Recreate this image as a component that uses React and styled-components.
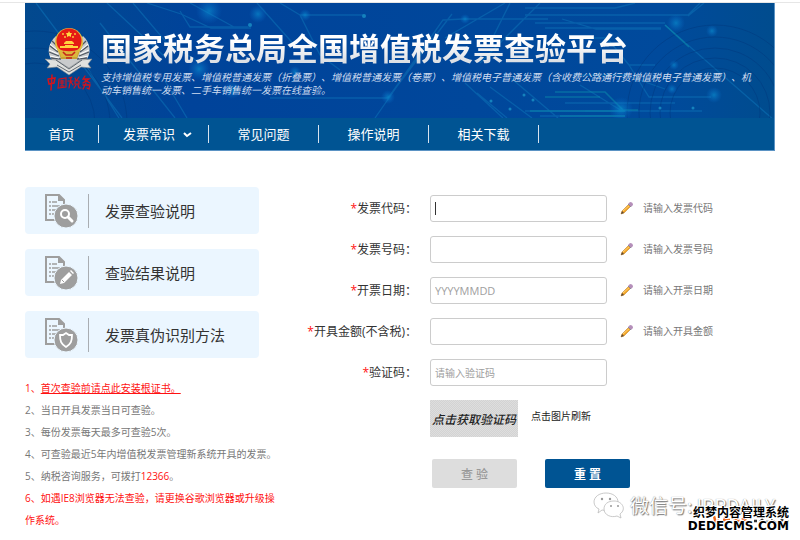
import React from "react";
import styled, { createGlobalStyle } from "styled-components";

const GlobalStyle = createGlobalStyle`
  *, *::before, *::after { box-sizing: border-box; }
  body {
    margin: 0;
    background: #fff;
    color: #333;
    font-family: "Open Sans", "Noto Sans CJK SC", sans-serif;
    font-size: 12px;
    text-spacing-trim: space-all;
  }
  button, input { font-family: inherit; }
`;

const Page = styled.div`
  position: relative;
  border-top: 1px solid #fff;
  padding: 0 25px 12px;
`;

const TopLine = styled.hr`
  height: 1px;
  margin: 1px -25px 0;
  border: 0;
  background: #e6e6e6;
`;

const Header = styled.header`
  background: #005493;
  border-right: 1px solid #5b93c4;
  border-bottom: 1px solid #5b93c4;
`;

const Banner = styled.div`
  position: relative;
  display: flex;
  gap: 10px;
  height: 115px;
  padding: 23px 9px 0 20px;
  background: linear-gradient(90deg, #02498e 0%, #00439a 22%, #00479b 60%, #004a9c 85%, #004c8e 100%);
  overflow: hidden;
`;

const Circuit = styled.svg`
  position: absolute;
  inset: 0;
  width: 100%;
  height: 100%;
`;

const Emblem = styled.svg`
  position: relative;
  flex: none;
  width: 48px;
  height: 68px;
`;

const Heading = styled.div`
  position: relative;
  flex: 1;
  margin-left: -2px;
`;

const Title = styled.h1`
  margin: 2px 0 0;
  font-size: 31px;
  line-height: 40px;
  font-weight: 700;
  white-space: nowrap;
  color: #f4f5f7;
  background: linear-gradient(#fff 35%, #dcdfe4 85%);
  background-clip: text;
  -webkit-text-fill-color: transparent;
`;

const Subtitle = styled.p`
  margin: 3px 0 0;
  max-width: 656px;
  font-size: 10px;
  line-height: 13px;
  font-style: italic;
  color: #cfdcf0;
`;

const Nav = styled.nav`
  display: flex;
  align-items: center;
  height: 32px;
`;

const NavLink = styled.a`
  display: flex;
  align-items: center;
  justify-content: center;
  gap: 8px;
  width: ${(p) => (p.$first ? "74px" : "110px")};
  height: 18px;
  padding-left: ${(p) => (p.$menu ? "8px" : "0")};
  border-right: 1px solid #d6e3ef;
  font-size: 13px;
  line-height: 18px;
  color: #fff;
  text-decoration: none;
`;

const Main = styled.main`
  display: grid;
  grid-template-columns: 257px 1fr;
  padding-top: 36px;
`;

const Cards = styled.div`
  display: grid;
  gap: 15px;
  width: 234px;
`;

const Card = styled.a`
  display: flex;
  align-items: center;
  height: 47px;
  padding-left: 19px;
  border-radius: 4px;
  background: #ebf6ff;
  color: #333;
  font-size: 15px;
  line-height: 20px;
  text-decoration: none;
`;

const CardIcon = styled.svg`
  width: 34px;
  height: 36px;
`;

const CardText = styled.span`
  margin-left: 10px;
  padding: 7px 0 7px 16px;
  border-left: 1px solid #a9adb2;
`;

const Notes = styled.ol`
  width: 257px;
  margin: 19px 0 0;
  padding: 0;
  list-style: none;
  font-size: 10px;
  line-height: 22px;
  color: #777;
`;

const Note = styled.li`
  color: ${(p) => (p.$alert ? "#f11" : "inherit")};
`;

const RedLink = styled.a`
  color: #f11;
  text-decoration: underline;
`;

const Red = styled.span`
  color: #f11;
`;

const Form = styled.form`
  display: grid;
  grid-template-columns: 135px 177px 1fr;
  column-gap: 13px;
  row-gap: 14px;
  align-content: start;
  padding-top: 8px;
`;

const Label = styled.label`
  grid-column: 1;
  font-size: 12px;
  line-height: 27px;
  text-align: right;
  white-space: nowrap;
`;

const Input = styled.input`
  width: 100%;
  height: 27px;
  padding: 0 4px;
  border: 1px solid #ccc;
  border-radius: 3px;
  outline: none;
  font-size: ${(p) => (p.$latin ? "11px" : "10px")};
  color: #333;
  background: ${(p) =>
    p.$caret ? "linear-gradient(#333, #333) 4px 6px / 1px 13px no-repeat #fff" : "#fff"};
  &::placeholder { color: #a0a0a0; opacity: 1; }
`;

const Hint = styled.span`
  display: flex;
  align-items: center;
  gap: 10px;
  font-size: 10px;
  line-height: 27px;
  color: #777;
`;

const PencilIcon = styled.svg`
  width: 13px;
  height: 13px;
`;

const CaptchaRow = styled.div`
  grid-column: 2 / -1;
  display: flex;
  gap: 13px;
  font-size: 10px;
  line-height: 32px;
  color: #222;
`;

const Captcha = styled.button`
  width: 88px;
  height: 37px;
  padding: 0;
  border: 0;
  background: repeating-conic-gradient(#d3d3d3 0 25%, #dedede 0 50%) 0 0 / 2px 2px;
  color: #222;
  font-size: 12px;
  font-weight: 500;
  font-style: italic;
`;

const Actions = styled.div`
  grid-column: 2 / -1;
  display: flex;
  gap: 28px;
  margin-top: 8px;
  padding-left: 2px;
`;

const Action = styled.button`
  width: 85px;
  height: 29px;
  padding: 0;
  border: 0;
  border-radius: 2px;
  font-size: 12px;
  font-weight: ${(p) => (p.$primary ? 700 : 500)};
  color: ${(p) => (p.$primary ? "#fff" : "#999")};
  background: ${(p) => (p.$primary ? "#005493" : "#ddd")};
`;

const WechatMark = styled.div`
  position: absolute;
  right: 25px;
  top: 489px;
  display: flex;
  align-items: center;
  gap: 5px;
  font-family: "Noto Sans CJK SC", sans-serif;
  font-size: 19px;
  line-height: 30px;
  color: #fff;
  white-space: nowrap;
  text-shadow: 1px 1px 1px #777, 0 0 1px #888;
`;

const WechatIcon = styled.svg`
  width: 32px;
  height: 29px;
`;

const CmsMark = styled.div`
  position: absolute;
  right: 11px;
  top: 505px;
  font-size: 12px;
  line-height: 14px;
  font-weight: 700;
  color: #000;
  text-align: right;
  white-space: nowrap;
  text-shadow: 1px 0 #fff, -1px 0 #fff, 0 1px #fff, 0 -1px #fff, 1px 1px #fff, -1px -1px #fff,
    0 0 2px #fff;
`;

const CmsDomain = styled.div`
  font-family: "DejaVu Sans", sans-serif;
  font-size: 12px;
  line-height: 12px;
`;

const Scraps = styled.svg`
  position: absolute;
  right: 10px;
  top: 513px;
  width: 78px;
  height: 11px;
`;

function CircuitArt() {
  return (
    <Circuit viewBox="0 0 749 115" preserveAspectRatio="none" aria-hidden="true" fill="none">
      <defs>
        <radialGradient id="glow">
          <stop offset="0" stopColor="#0a90d0" stopOpacity=".65" />
          <stop offset="1" stopColor="#0a6fd0" stopOpacity="0" />
        </radialGradient>
      </defs>
      <g stroke="#0c6fb4" strokeWidth="1.3" opacity=".6">
        <path d="M11 0 97 115M50 45l44 70M75 20l75 95M82 0l58 54M108 0l33 39 33 20M140 78l22 37M122 0l34 11 30 14h40" />
        <path d="M155 8l10 16h58M165 0l44 24M275 12h64M275 12l-20-12M275 12l20 40 20 15M232 0l40 45" />
        <path d="M245 95h118l55-78 20-1h85M363 95l64-84M350 115l68-98M420 35l60-35M465 40l20-40M455 60l60-60" />
        <path d="M500 5h90l20-5M500 12h163l12-12M510 20h130M520 25h116M537 16l34 10h65M663 13l16-13" />
        <path d="M560 35h22l22 27h26M550 72h50l40 14M640 22l109 95M555 82l42 26M604 62l20 32h62M560 108h117M540 100h110" />
        <path d="M440 80l38 35M452 90l30 25M465 84l42 31M480 70l53 45M500 108h100M515 113h85" />
      </g>
      <g stroke="#00377c" opacity=".45">
        <circle cx="690" cy="110" r="45" /><circle cx="690" cy="110" r="55" />
        <circle cx="690" cy="110" r="65" /><circle cx="690" cy="110" r="76" />
        <circle cx="690" cy="110" r="88" /><circle cx="10" cy="120" r="60" />
        <circle cx="10" cy="120" r="75" /><circle cx="10" cy="120" r="92" />
      </g>
      <g stroke="#0b94ae" strokeWidth="1.6" opacity=".5">
        <path d="M530 89h50l18 18h15M520 94h55M505 108h95M535 113h65M640 22l24 22" />
      </g>
      <g fill="url(#glow)">
        <circle cx="184" cy="8" r="13" /><circle cx="233" cy="11" r="9" />
        <circle cx="207" cy="87" r="9" /><circle cx="174" cy="66" r="11" />
        <circle cx="280" cy="12" r="6" /><circle cx="363" cy="94" r="7" />
        <circle cx="440" cy="16" r="5" /><circle cx="651" cy="20" r="9" />
        <circle cx="687" cy="28" r="6" /><circle cx="649" cy="62" r="5" />
        <circle cx="689" cy="92" r="8" /><circle cx="596" cy="106" r="12" />
        <circle cx="647" cy="86" r="5" /><circle cx="270" cy="69" r="6" />
      </g>
      <g fill="#1582bd">
        <circle cx="225" cy="22" r="2" /><circle cx="339" cy="13" r="2" />
        <circle cx="466" cy="98" r="1.5" /><circle cx="485" cy="106" r="1.5" />
        <circle cx="499" cy="92" r="1.5" /><circle cx="508" cy="97" r="1.5" />
        <circle cx="635" cy="105" r="1.5" /><circle cx="668" cy="105" r="1.5" />
      </g>
    </Circuit>
  );
}

function EmblemArt() {
  return (
    <Emblem viewBox="0 0 48 68" role="img" aria-label="中国税务">
      <path d="M11 10C3 17 1 28 8 35l15 9 17-8c7-8 6-19-2-26L24 27Z" fill="#c9cbcd" />
      <path d="M7 15l7 7M5 20l8 6M4 26l10 4M6 32l10 1M41 15l-7 7M43 20l-8 6M44 26l-10 4M42 32l-10 1" stroke="#4e5661" strokeWidth="1.3" />
      <path d="M5 18l7 6M4 24l9 4M5 30l9 2M43 18l-7 6M44 24l-9 4M43 30l-9 2" stroke="#fff" strokeWidth="1" />
      <path d="M0 33l11 1 13 8 12-8 11-1-4 5 3 4-10-1-12 8-12-8-10 1 3-4Z" fill="#e0e1df" stroke="#7d8489" strokeWidth=".6" />
      <path d="M11 34l13 9 13-9M12 39l12 7 12-7" fill="none" stroke="#626a73" strokeWidth="1" />
      <path d="M12 22l4 11h16l4-11Z" fill="#c6a336" />
      <circle cx="24" cy="16" r="14" fill="#e3bd3f" />
      <circle cx="24" cy="15" r="12.5" fill="#e51b15" />
      <path d="M24 5l1 2h2l-1 2v2l-2-1-2 1v-2l-1-2h2Z" fill="#ffda42" />
      <g fill="#ffd33e">
        <circle cx="18" cy="8" r=".9" /><circle cx="20" cy="11" r=".9" />
        <circle cx="30" cy="8" r=".9" /><circle cx="28" cy="11" r=".9" />
        <path d="M19 17l2-2h6l2 2v1H19ZM20 19h8v1h5v2H15v-2h5Z" />
      </g>
      <path d="M14 23c5 3 15 3 20 0l-2 8H16Z" fill="#ddb73d" />
      <path d="M18 26l3 3h6l3-3M21 32h6" fill="none" stroke="#c4251a" strokeWidth="1.6" />
      <g fill="none" stroke="#d3131c" strokeWidth="1.5" strokeLinecap="round">
        <path d="M3 53l1 5 5-1 1-5-7 1M7 49l-1 15" />
        <path d="M14 53l-1 9 8-1V52l-7 1M15 55h4M17 54v6M15 57h4M15 60h4" strokeWidth="1.1" />
        <path d="M24 52l3-1M23 55h5M26 52l-2 10M26 56l2 3M30 52l1 2M34 51l-2 3M30 55h4v3h-4ZM31 59l-2 3M33 59l1 3h2" strokeWidth="1.2" />
        <path d="M40 50l-2 3h6l-6 4M40 54l5 3M38 59h7l-1 4-2-1M41 57l-3 6" strokeWidth="1.3" />
      </g>
    </Emblem>
  );
}

const badges = {
  search: (
    <g fill="none" stroke="#fff" strokeLinecap="round">
      <circle cx="21" cy="21" r="4" strokeWidth="2" />
      <path d="M24 24l4 4" strokeWidth="3" />
    </g>
  ),
  pencil: (
    <g>
      <path d="M16 29l1-4 8-8 3 3-8 8ZM26 16l1-1 3 3-1 1Z" fill="#fff" />
      <path d="M18 25l2 2" stroke="#9e9e9e" />
    </g>
  ),
  shield: (
    <path d="M22 16l3 2h3c0 6-1 9-6 12-5-3-6-6-6-12h3Z" fill="none" stroke="#fff" strokeWidth="1.8" />
  ),
};

function DocumentIcon({ badge }) {
  return (
    <CardIcon viewBox="0 0 34 36" aria-hidden="true">
      <path d="M11 27H2V2h13l5 5v5" fill="none" stroke="#9e9e9e" strokeWidth="2" />
      <path d="M14 1v7h7" fill="#9e9e9e" />
      <path d="M5 9h2m1 0h5M5 13h2m1 0h9M5 17h2m1 0h4M5 21h2m1 0h2" stroke="#9e9e9e" strokeWidth="1.4" />
      <circle cx="22" cy="23" r="12" fill="#9e9e9e" stroke="#ebf6ff" strokeWidth="1" />
      {badges[badge]}
    </CardIcon>
  );
}

function Pencil() {
  return (
    <PencilIcon viewBox="0 0 13 13" aria-hidden="true">
      <path d="M1 12l1-3 7-7 2 2-7 7Z" fill="#f4a423" stroke="#b57a28" strokeWidth=".5" />
      <path d="M3 9l7-6" stroke="#ffd275" />
      <path d="M8 2l2-2c2 0 3 1 3 3l-2 2Z" fill="#b58fba" />
      <path d="M8 2l3 3" stroke="#8b8994" />
      <path d="M1 12l1-3 2 2Z" fill="#5d4937" />
    </PencilIcon>
  );
}

const navItems = ["首页", "发票常识", "常见问题", "操作说明", "相关下载"];

const cards = [
  { text: "发票查验说明", badge: "search" },
  { text: "查验结果说明", badge: "pencil" },
  { text: "发票真伪识别方法", badge: "shield" },
];

const fields = [
  { id: "code", label: "发票代码：", hint: "请输入发票代码", caret: true },
  { id: "number", label: "发票号码：", hint: "请输入发票号码" },
  { id: "date", label: "开票日期：", hint: "请输入开票日期", placeholder: "YYYYMMDD", latin: true },
  { id: "amount", label: "开具金额(不含税)：", hint: "请输入开具金额" },
  { id: "captcha", label: "验证码：", placeholder: "请输入验证码" },
];

export default function App() {
  return (
    <Page>
      <GlobalStyle />
      <TopLine />
      <Header>
        <Banner>
          <CircuitArt />
          <EmblemArt />
          <Heading>
            <Title>国家税务总局全国增值税发票查验平台</Title>
            <Subtitle>
              支持增值税专用发票、增值税普通发票（折叠票）、增值税普通发票（卷票）、增值税电子普通发票（含收费公路通行费增值税电子普通发票）、机动车销售统一发票、二手车销售统一发票在线查验。
            </Subtitle>
          </Heading>
        </Banner>
        <Nav>
          {navItems.map((item, i) => (
            <NavLink href="#" key={item} $first={i === 0} $menu={i === 1}>
              {item}
              {i === 1 && (
                <svg width="9" height="7" viewBox="0 0 9 7" aria-hidden="true">
                  <path d="M1 2l3 3 4-3" fill="none" stroke="#fff" strokeWidth="2" />
                </svg>
              )}
            </NavLink>
          ))}
        </Nav>
      </Header>
      <Main>
        <aside>
          <Cards>
            {cards.map((card) => (
              <Card href="#" key={card.text}>
                <DocumentIcon badge={card.badge} />
                <CardText>{card.text}</CardText>
              </Card>
            ))}
          </Cards>
          <Notes>
            <Note $alert>1、<RedLink href="#">首次查验前请点此安装根证书。</RedLink></Note>
            <Note>2、当日开具发票当日可查验。</Note>
            <Note>3、每份发票每天最多可查验5次。</Note>
            <Note>4、可查验最近5年内增值税发票管理新系统开具的发票。</Note>
            <Note>5、纳税咨询服务，可拨打<Red>12366</Red>。</Note>
            <Note $alert>6、如遇IE8浏览器无法查验，请更换谷歌浏览器或升级操作系统。</Note>
          </Notes>
        </aside>
        <Form>
          {fields.map((f) => (
            <React.Fragment key={f.id}>
              <Label htmlFor={f.id}><Red>*</Red>{f.label}</Label>
              <Input id={f.id} placeholder={f.placeholder} $caret={f.caret} $latin={f.latin} />
              {f.hint ? <Hint><Pencil />{f.hint}</Hint> : <span />}
            </React.Fragment>
          ))}
          <CaptchaRow>
            <Captcha type="button">点击获取验证码</Captcha>
            <span>点击图片刷新</span>
          </CaptchaRow>
          <Actions>
            <Action type="button">查 验</Action>
            <Action type="reset" $primary>重 置</Action>
          </Actions>
        </Form>
      </Main>
      <WechatMark>
        <WechatIcon viewBox="0 0 32 29" aria-hidden="true">
          <g fill="#fff" stroke="#bbb" strokeWidth=".8">
            <path d="M13 2C6 2 1 6 1 11c0 3 2 6 5 7l-1 4 4-3c9 2 16-2 16-8 0-5-5-9-12-9Z" />
            <path d="M21 10c-6 0-10 3-10 8 0 6 7 9 13 7l4 2-1-4c7-5 2-13-6-13Z" />
          </g>
          <g fill="#999">
            <circle cx="9" cy="8" r="1.2" /><circle cx="17" cy="8" r="1.2" />
            <circle cx="18" cy="15" r="1" /><circle cx="25" cy="15" r="1" />
          </g>
        </WechatIcon>
        <span>微信号: IPRDAILY</span>
      </WechatMark>
      <Scraps viewBox="0 0 78 11" aria-hidden="true">
        <path d="M2 2l2 8 3-4M11 6h7M13 3v6M21 7h7M30 4l6 4M24 3v6" fill="none" stroke="#f26a1b" strokeWidth="2.5" />
        <path d="M42 7h3M48 8l3-3M54 8h3M59 6l5 3M68 8l3-3M73 8h4" fill="none" stroke="#333" strokeWidth="2.5" />
      </Scraps>
      <CmsMark>
        织梦内容管理系统
        <CmsDomain>DEDECMS.COM</CmsDomain>
      </CmsMark>
    </Page>
  );
}
